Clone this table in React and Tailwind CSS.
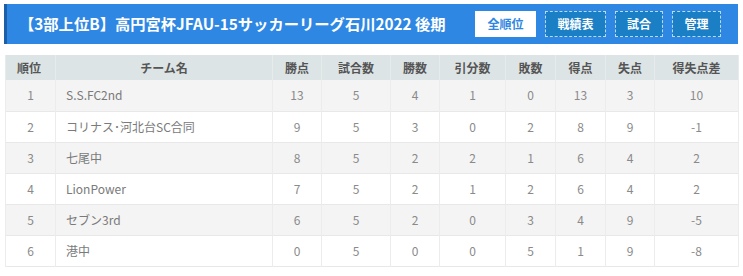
import React from "react";

const cols = [
  { label: "順位", w: 50 },
  { label: "チーム名", w: 217 },
  { label: "勝点", w: 49 },
  { label: "試合数", w: 69 },
  { label: "勝数", w: 49 },
  { label: "引分数", w: 66 },
  { label: "敗数", w: 50 },
  { label: "得点", w: 50 },
  { label: "失点", w: 49 },
  { label: "得失点差", w: 84 },
];

const rows = [
  ["1", "S.S.FC2nd", "13", "5", "4", "1", "0", "13", "3", "10"],
  ["2", "コリナス･河北台SC合同", "9", "5", "3", "0", "2", "8", "9", "-1"],
  ["3", "七尾中", "8", "5", "2", "2", "1", "6", "4", "2"],
  ["4", "LionPower", "7", "5", "2", "1", "2", "6", "4", "2"],
  ["5", "セブン3rd", "6", "5", "2", "0", "3", "4", "9", "-5"],
  ["6", "港中", "0", "5", "0", "0", "5", "1", "9", "-8"],
];

const font = { fontFamily: '"Noto Sans CJK JP", "Noto Sans", sans-serif' };

export default function App() {
  return (
    <div className="w-[743px] h-[276px] bg-white overflow-hidden" style={font}>
      <div className="ml-[4px] mt-[4px] w-[734px] h-[40px] bg-[#2e87e3] border-l-[3px] border-[#1d5fa6] flex items-center pl-[12px] pr-[17px]">
        <div className="text-white font-bold text-[15.3px] leading-none whitespace-nowrap">
          【3部上位B】高円宮杯JFAU-15サッカーリーグ石川2022 後期
        </div>
        <div className="ml-auto flex items-center gap-[9px]">
          <div className="w-[61px] h-[26px] bg-white text-[#2e87e3] font-bold text-[12px] flex items-center justify-center">
            全順位
          </div>
          <div className="w-[61px] h-[26px] bg-[#1b7fc6] border border-dashed border-[#b9d8f2] text-white font-bold text-[12px] flex items-center justify-center">
            戦績表
          </div>
          <div className="w-[48px] h-[26px] bg-[#1b7fc6] border border-dashed border-[#b9d8f2] text-white font-bold text-[12px] flex items-center justify-center">
            試合
          </div>
          <div className="w-[49px] h-[26px] bg-[#1b7fc6] border border-dashed border-[#b9d8f2] text-white font-bold text-[12px] flex items-center justify-center">
            管理
          </div>
        </div>
      </div>

      <table className="ml-[5px] mt-[11px] w-[733px] table-fixed border-collapse text-[12px]">
        <colgroup>
          {cols.map((c) => (
            <col key={c.label} style={{ width: c.w }} />
          ))}
        </colgroup>
        <thead>
          <tr className="h-[25px] bg-[#dde4e5]">
            {cols.map((c, i) => (
              <th
                key={c.label}
                className={`font-bold text-[#555] text-[12px] p-0 border-x border-[#e6ebec] ${i === 0 ? "text-left pl-[11px]" : "text-center"}`}
              >
                {c.label}
              </th>
            ))}
          </tr>
        </thead>
        <tbody>
          {rows.map((r, ri) => (
            <tr
              key={ri}
              className={`h-[31px] border-b border-[#e8e8e8] ${ri % 2 === 0 ? "bg-[#f4f4f4]" : "bg-white"}`}
            >
              {r.map((v, ci) => (
                <td
                  key={ci}
                  className={`p-0 border-x border-[#ececec] ${ci === 1 ? "text-left pl-[10px] text-[#7a7a7a]" : "text-center text-[#8a8a8a]"}`}
                >
                  {v}
                </td>
              ))}
            </tr>
          ))}
        </tbody>
      </table>
    </div>
  );
}
